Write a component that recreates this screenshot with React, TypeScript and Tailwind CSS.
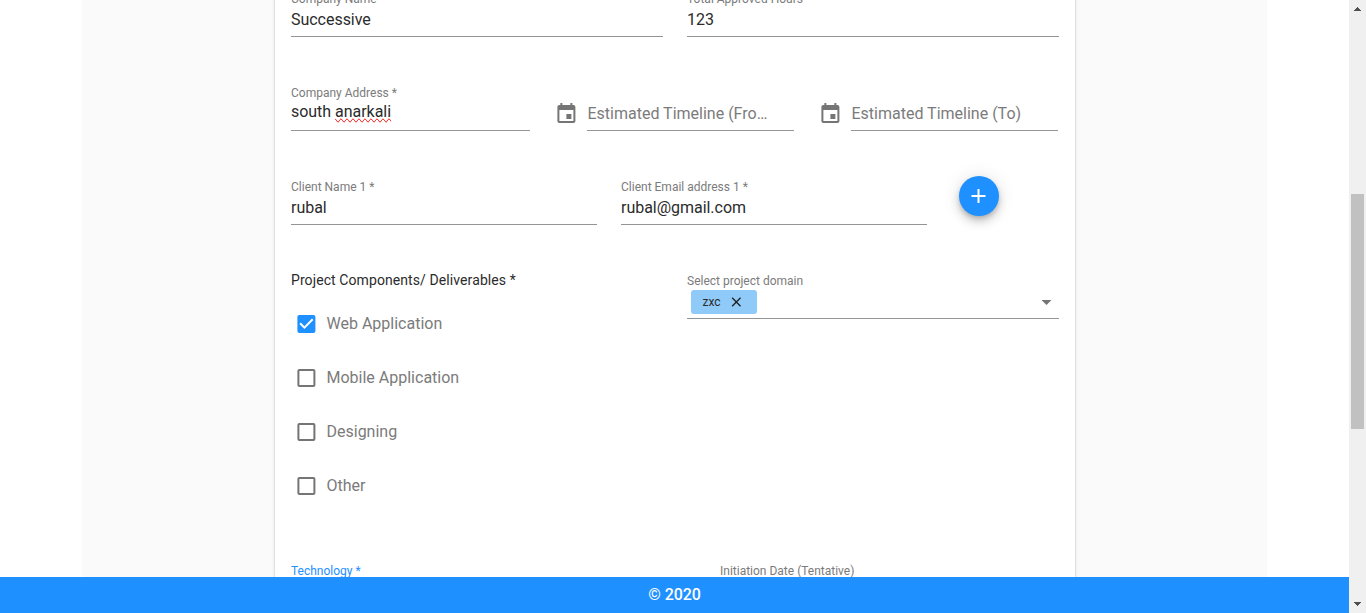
import type { ReactNode } from "react";

type FieldProps = {
  label: string;
  value: ReactNode;
  className?: string;
  valueClass?: string;
};

function Field({ label, value, className = "", valueClass = "" }: FieldProps) {
  return (
    <div className={`h-12 border-b border-[#949494] ${className}`}>
      <div className="h-5 text-xs leading-5 text-[#7b7b7b]">{label}</div>
      <div className={`text-base leading-[22px] tracking-[-0.03px] text-[#2b2b2b] ${valueClass}`}>{value}</div>
    </div>
  );
}

function CalendarIcon() {
  return (
    <svg viewBox="-0.4 0 24 24" className="size-6 shrink-0 fill-[#757575]">
      <path d="M17 12h-5v5h5v-5zM16 1v2H8V1H6v2H5c-1.11 0-1.99.9-1.99 2L3 19c0 1.1.89 2 2 2h14c1.1 0 2-.9 2-2V5c0-1.1-.9-2-2-2h-1V1h-2zm3 18H5V8h14v11z" />
    </svg>
  );
}

function DateField({ label }: { label: string }) {
  return (
    <div className="flex h-12 w-[240px]">
      <div className="w-[33px] pt-[19px]">
        <CalendarIcon />
      </div>
      <div className="w-[207px] border-b border-[#949494] pt-[19px] text-base leading-6 whitespace-nowrap text-[#7b7b7b]">
        <span className="pl-[0.5px]">{label}</span>
      </div>
    </div>
  );
}

function CheckRow({ label, checked = false }: { label: string; checked?: boolean }) {
  return (
    <div className="flex h-[54px] items-center pl-[3px]">
      <svg viewBox="-0.4 0 24 24" className={`size-6 ${checked ? "fill-[#1e90ff]" : "fill-[#757575]"}`}>
        {checked ? (
          <path d="M19 3H5c-1.11 0-2 .9-2 2v14c0 1.1.89 2 2 2h14c1.11 0 2-.9 2-2V5c0-1.1-.89-2-2-2zm-9 14l-5-5 1.41-1.41L10 14.17l7.59-7.59L19 8l-9 9z" />
        ) : (
          <path d="M19 5v14H5V5h14m0-2H5c-1.1 0-2 .9-2 2v14c0 1.1.9 2 2 2h14c1.1 0 2-.9 2-2V5c0-1.1-.9-2-2-2z" />
        )}
      </svg>
      <span className="pl-[8.5px] text-base leading-6 text-[#7b7b7b]">{label}</span>
    </div>
  );
}

export default function App() {
  return (
    <div className="flex h-[613px] w-[1366px] overflow-hidden bg-white font-['Roboto',sans-serif]">
      <div className="flex w-[1349px] flex-col">
        <main className="flex h-[577px] justify-center overflow-hidden">
          <div className="flex w-[1185px] justify-center bg-[#fafafa] pl-px">
            <form className="-mt-[11px] w-[800px] bg-white px-4 shadow-[0_1px_3px_rgba(0,0,0,0.2),0_1px_1px_rgba(0,0,0,0.14),0_2px_1px_-1px_rgba(0,0,0,0.12)]">
              <div className="mb-[46px] flex gap-6">
                <Field label="Company Name" value="Successive" className="w-[372px]" />
                <Field label="Total Approved Hours" value="123" className="w-[372px]" />
              </div>

              <div className="mb-[46px] flex gap-6">
                <Field
                  label="Company Address *"
                  value={
                    <>
                      south{" "}
                      <span className="[text-decoration-line:spelling-error]">anarkali</span>
                    </>
                  }
                  className="w-[239px]"
                  valueClass="-mt-0.5"
                />
                <DateField label="Estimated Timeline (Fro…" />
                <DateField label="Estimated Timeline (To)" />
              </div>

              <div className="mb-[46px] flex gap-6">
                <Field label="Client Name 1 *" value="rubal" className="w-[306px]" />
                <Field label="Client Email address 1 *" value="rubal@gmail.com" className="w-[306px]" />
                <button
                  type="button"
                  className="-mt-px ml-2 flex size-10 items-center justify-center rounded-full bg-[#1e90ff] shadow-[0_3px_5px_-1px_rgba(0,0,0,0.2),0_6px_10px_0_rgba(0,0,0,0.14),0_1px_18px_0_rgba(0,0,0,0.12)]"
                >
                  <svg viewBox="0.5 0 24 24" className="size-6 fill-white">
                    <path d="M19 13h-6v6h-2v-6H5v-2h6V5h2v6h6v2z" />
                  </svg>
                </button>
              </div>

              <div className="flex h-[290px] gap-6">
                <div className="w-[372px]">
                  <div className="h-[26px] text-sm leading-[19px] tracking-[0.09px] text-[#2b2b2b]">
                    Project Components/ Deliverables *
                  </div>
                  <CheckRow label="Web Application" checked />
                  <CheckRow label="Mobile Application" />
                  <CheckRow label="Designing" />
                  <CheckRow label="Other" />
                </div>
                <div className="h-12 w-[372px] border-b border-[#949494]">
                  <div className="h-[19px] text-xs leading-5 text-[#7b7b7b]">
                    Select project domain
                  </div>
                  <div className="flex h-6 items-center justify-between pl-1">
                    <div className="flex h-6 w-[66px] items-center rounded-[3px] bg-[#90caf9] pl-[11.5px] text-xs text-[#2b2b2b]">
                      <span className="w-[25.5px]">zxc</span>
                      <svg viewBox="-0.5 0 24 24" className="size-4 fill-[#212121]">
                        <path d="M19 6.41L17.59 5 12 10.59 6.41 5 5 6.41 10.59 12 5 17.59 6.41 19 12 13.41 17.59 19 19 17.59 13.41 12z" />
                      </svg>
                    </div>
                    <svg viewBox="0.5 0 24 24" className="size-6 fill-[#757575]">
                      <path d="M7 10l5 5 5-5z" />
                    </svg>
                  </div>
                </div>
              </div>

              <div className="flex text-xs leading-5">
                <div className="w-[429px] text-[#1e90ff]">Technology *</div>
                <div className="text-[#7b7b7b]">Initiation Date (Tentative)</div>
              </div>
            </form>
          </div>
        </main>
        <footer className="flex h-9 items-center justify-center bg-[#1e90ff] text-base font-medium tracking-[-0.05px] text-white">
          © 2020
        </footer>
      </div>

      <div className="flex w-[17px] flex-col items-center bg-[#f0f0f0]">
        <div className="flex h-[194px] justify-center pt-[7px]">
          <svg viewBox="0 0 7 4" className="h-1 w-[7px] fill-[#505050]" shapeRendering="crispEdges">
            <path d="M3 0h1v1h1v1h1v1h1v1H0V3h1V2h1V1h1z" />
          </svg>
        </div>
        <div className="h-[235px] w-[13px] bg-[#c1c1c1]" />
        <div className="flex flex-1 items-end pb-[7px]">
          <svg viewBox="0 0 7 4" className="h-1 w-[7px] fill-[#505050]" shapeRendering="crispEdges">
            <path d="M3 4h1V3h1V2h1V1h1V0H0v1h1v1h1v1h1z" />
          </svg>
        </div>
      </div>
    </div>
  );
}
